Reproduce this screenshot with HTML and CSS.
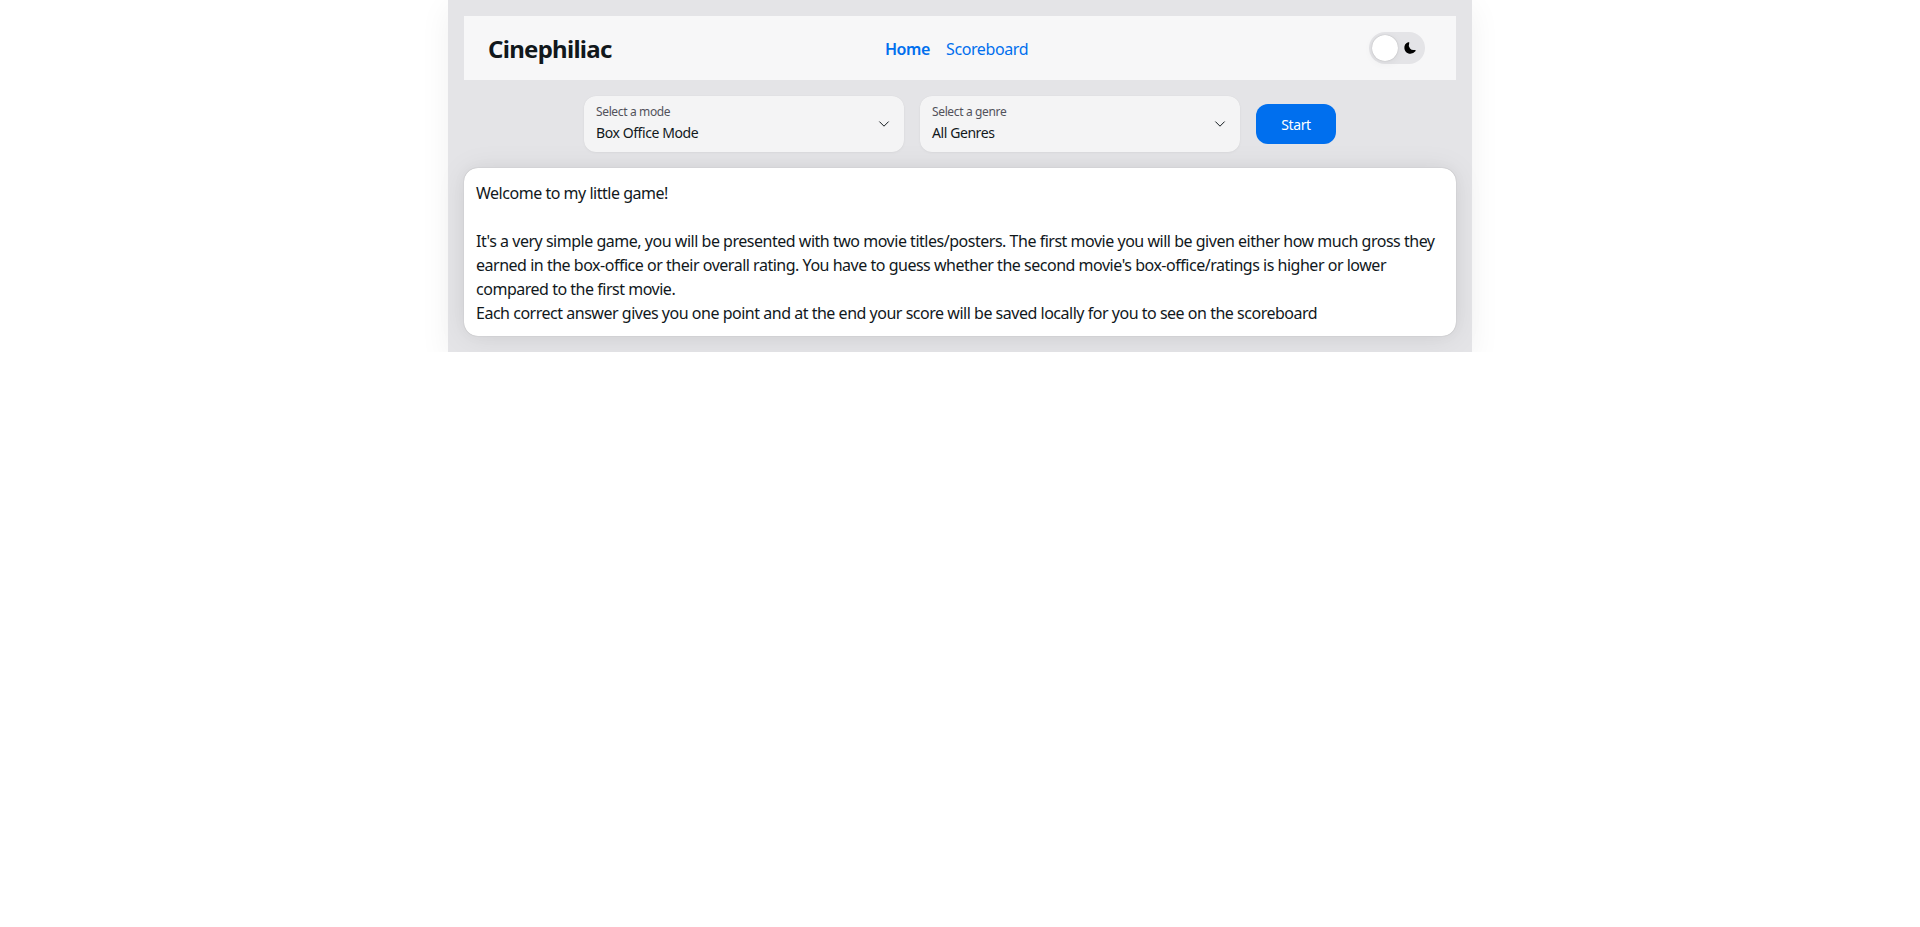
FILE: index.html
```html
<!DOCTYPE html>
<html lang="en">
<head>
<meta charset="utf-8">
<title>Cinephiliac</title>
<link rel="stylesheet" href="styles.css">
</head>
<body>
<div class="app">
  <nav class="navbar">
    <div class="brand">Cinephiliac</div>
    <div class="links">
      <a class="link active" href="#">Home</a>
      <a class="link" href="#">Scoreboard</a>
    </div>
    <div class="nav-end">
      <div class="switch">
        <span class="thumb"></span>
        <svg class="moon" viewBox="0 0 24 24" width="14" height="14" aria-hidden="true"><path fill="currentColor" d="M21.53 15.93c-.16-.27-.61-.69-1.730-.49a8.46 8.46 0 01-1.88.13 8.409 8.409 0 01-5.91-2.82 8.068 8.068 0 01-1.44-8.66c.44-1.01.13-1.54-.09-1.760s-.77-.55-1.83-.11a10.318 10.318 0 00-6.32 10.21 10.475 10.475 0 007.04 8.99 10 10 0 002.89.55c.16.01.32.02.48.02a10.5 10.5 0 008.47-4.27c.67-.93.49-1.519.32-1.79z"/></svg>
      </div>
    </div>
  </nav>
  <div class="controls">
    <div class="select">
      <span class="select-label">Select a mode</span>
      <span class="select-value">Box Office Mode</span>
      <svg class="chevron" viewBox="0 0 24 24" width="14" height="14" aria-hidden="true"><path fill="none" stroke="currentColor" stroke-width="1.7" stroke-linecap="round" stroke-linejoin="round" d="m19.5 8.25-7.5 7.5-7.5-7.5"/></svg>
    </div>
    <div class="select">
      <span class="select-label">Select a genre</span>
      <span class="select-value">All Genres</span>
      <svg class="chevron" viewBox="0 0 24 24" width="14" height="14" aria-hidden="true"><path fill="none" stroke="currentColor" stroke-width="1.7" stroke-linecap="round" stroke-linejoin="round" d="m19.5 8.25-7.5 7.5-7.5-7.5"/></svg>
    </div>
    <button class="start">Start</button>
  </div>
  <div class="card">Welcome to my little game!

It's a very simple game, you will be presented with two movie titles/posters. The first movie you will be given either how much gross they earned in the box-office or their overall rating. You have to guess whether the second movie's box-office/ratings is higher or lower compared to the first movie.
Each correct answer gives you one point and at the end your score will be saved locally for you to see on the scoreboard</div>
</div>
</body>
</html>
```

FILE: styles.css
```css
* { box-sizing: border-box; }
html, body { margin: 0; padding: 0; background: #ffffff; }
body {
  font-family: "Noto Sans", "Open Sans", sans-serif;
  color: #11181c;
  letter-spacing: -0.025em;
}
.app {
  width: 1024px;
  margin: 0 auto;
  background: #e4e4e7;
  padding: 16px;
  display: flex;
  flex-direction: column;
  gap: 16px;
  box-shadow: 0 8px 30px rgba(0,0,0,0.06);
}
.navbar {
  height: 64px;
  background: rgba(255,255,255,0.7);
  display: grid;
  grid-template-columns: 1fr auto 1fr;
  align-items: center;
  padding: 1px 31px 0 24px;
}
.brand {
  font-size: 24px;
  font-weight: 700;
  line-height: 32px;
  letter-spacing: -0.03em;
  color: #11181c;
}
.links { display: flex; gap: 16px; }
.link {
  font-size: 16px;
  line-height: 24px;
  color: #006fee;
  text-decoration: none;
}
.link.active { font-weight: 600; }
.nav-end { display: flex; justify-content: flex-end; }
.switch {
  position: relative;
  width: 56px;
  height: 32px;
  margin-top: -1px;
  border-radius: 16px;
  background: #e4e4e7;
  display: flex;
  align-items: center;
  justify-content: flex-end;
  padding-right: 8px;
  color: #000;
}
.thumb {
  position: absolute;
  left: 3px;
  top: 3px;
  width: 26px;
  height: 26px;
  border-radius: 50%;
  background: #fff;
  box-shadow: 0 0 5px rgba(0,0,0,0.02), 0 2px 10px rgba(0,0,0,0.06), 0 0 1px rgba(0,0,0,0.3);
}
.moon { display: block; }
.controls {
  display: flex;
  justify-content: center;
  align-items: center;
  gap: 16px;
}
.select {
  position: relative;
  width: 320px;
  height: 56px;
  background: #f4f4f5;
  border-radius: 12px;
  padding: 8px 12px 0;
  display: flex;
  flex-direction: column;
  gap: 3px;
  box-shadow: 0 0 1px rgba(0,0,0,0.08), 0 1px 3px rgba(0,0,0,0.04);
}
.select-label {
  font-size: 12px;
  line-height: 16px;
  letter-spacing: -0.03em;
  color: #52525b;
}
.select-value {
  font-size: 14px;
  line-height: 20px;
  letter-spacing: -0.03em;
  color: #11181c;
}
.chevron {
  position: absolute;
  right: 13px;
  top: 21px;
  color: #11181c;
}
.start {
  width: 80px;
  height: 40px;
  border: 0;
  border-radius: 12px;
  background: #006fee;
  color: #fff;
  font-family: inherit;
  letter-spacing: inherit;
  font-size: 14px;
}
.card {
  background: #fff;
  border-radius: 14px;
  padding: 13px 12px 11px;
  font-size: 16px;
  line-height: 24px;
  letter-spacing: -0.03em;
  white-space: pre-line;
  box-shadow: 0 0 15px rgba(0,0,0,0.03), 0 2px 30px rgba(0,0,0,0.08), 0 0 1px rgba(0,0,0,0.3);
}
```
